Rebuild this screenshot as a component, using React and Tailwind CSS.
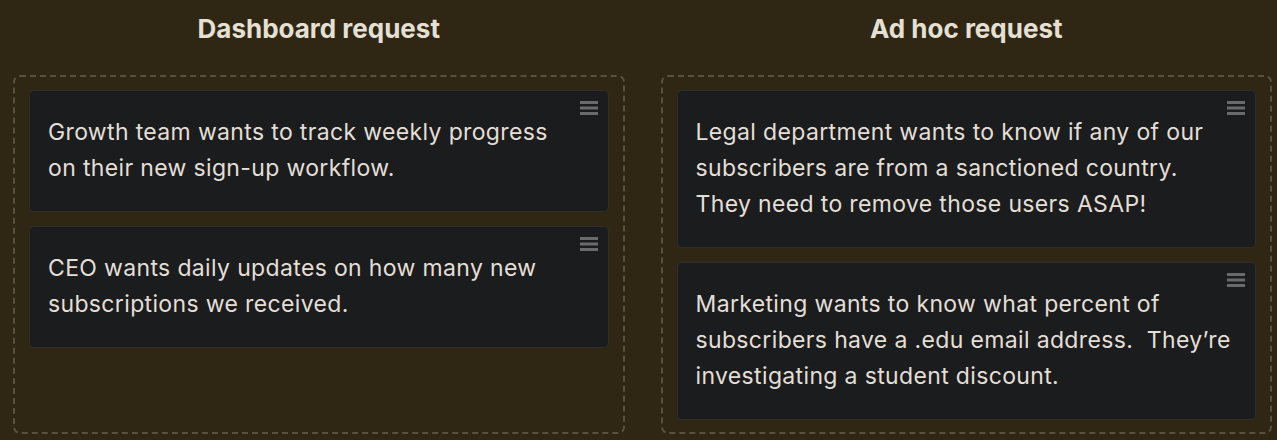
import React from "react";

const columns = [
  {
    title: "Dashboard request",
    cards: [
      "Growth team wants to track weekly progress\non their new sign-up workflow.",
      "CEO wants daily updates on how many new\nsubscriptions we received.",
    ],
  },
  {
    title: "Ad hoc request",
    cards: [
      "Legal department wants to know if any of our\nsubscribers are from a sanctioned country.\nThey need to remove those users ASAP!",
      "Marketing wants to know what percent of\nsubscribers have a .edu email address.  They\u2019re\ninvestigating a student discount.",
    ],
  },
];

const Handle = () => (
  <svg width="18" height="14" viewBox="0 0 18 14" className="absolute top-[10px] right-[10px]">
    <rect x="0" y="0" width="18" height="3" fill="#6a6a6a" />
    <rect x="0" y="5.5" width="18" height="3" fill="#6a6a6a" />
    <rect x="0" y="11" width="18" height="3" fill="#6a6a6a" />
  </svg>
);

const Card = ({ text }) => (
  <div className="relative rounded-[5px] border border-[#2d2e31] bg-[#1b1c1e] pl-[18px] pr-[20px] pt-[23px] pb-[25px]">
    <Handle />
    <p className="text-[23px] leading-[36px] tracking-[0.35px] text-[#e4dfd6] whitespace-pre">{text}</p>
  </div>
);

export default function App() {
  return (
    <div
      className="h-[440px] w-full overflow-hidden bg-[#2f2714] pl-[13px] pr-[5px]"
      style={{ fontFamily: "Inter, 'Noto Sans', sans-serif" }}
    >
      <div className="grid grid-cols-2 gap-[36px]">
        {columns.map((col) => (
          <div key={col.title} className="flex flex-col">
            <h2 className="h-[75px] pt-[12px] text-center text-[26px] font-bold leading-[34px] text-[#e6e0d4]">
              {col.title}
            </h2>
            <div className="flex h-[359px] flex-col gap-[14px] rounded-[7px] border-2 border-dashed border-[#5a503e] px-[14px] pt-[13px]">
              {col.cards.map((c) => (
                <Card key={c} text={c} />
              ))}
            </div>
          </div>
        ))}
      </div>
    </div>
  );
}
